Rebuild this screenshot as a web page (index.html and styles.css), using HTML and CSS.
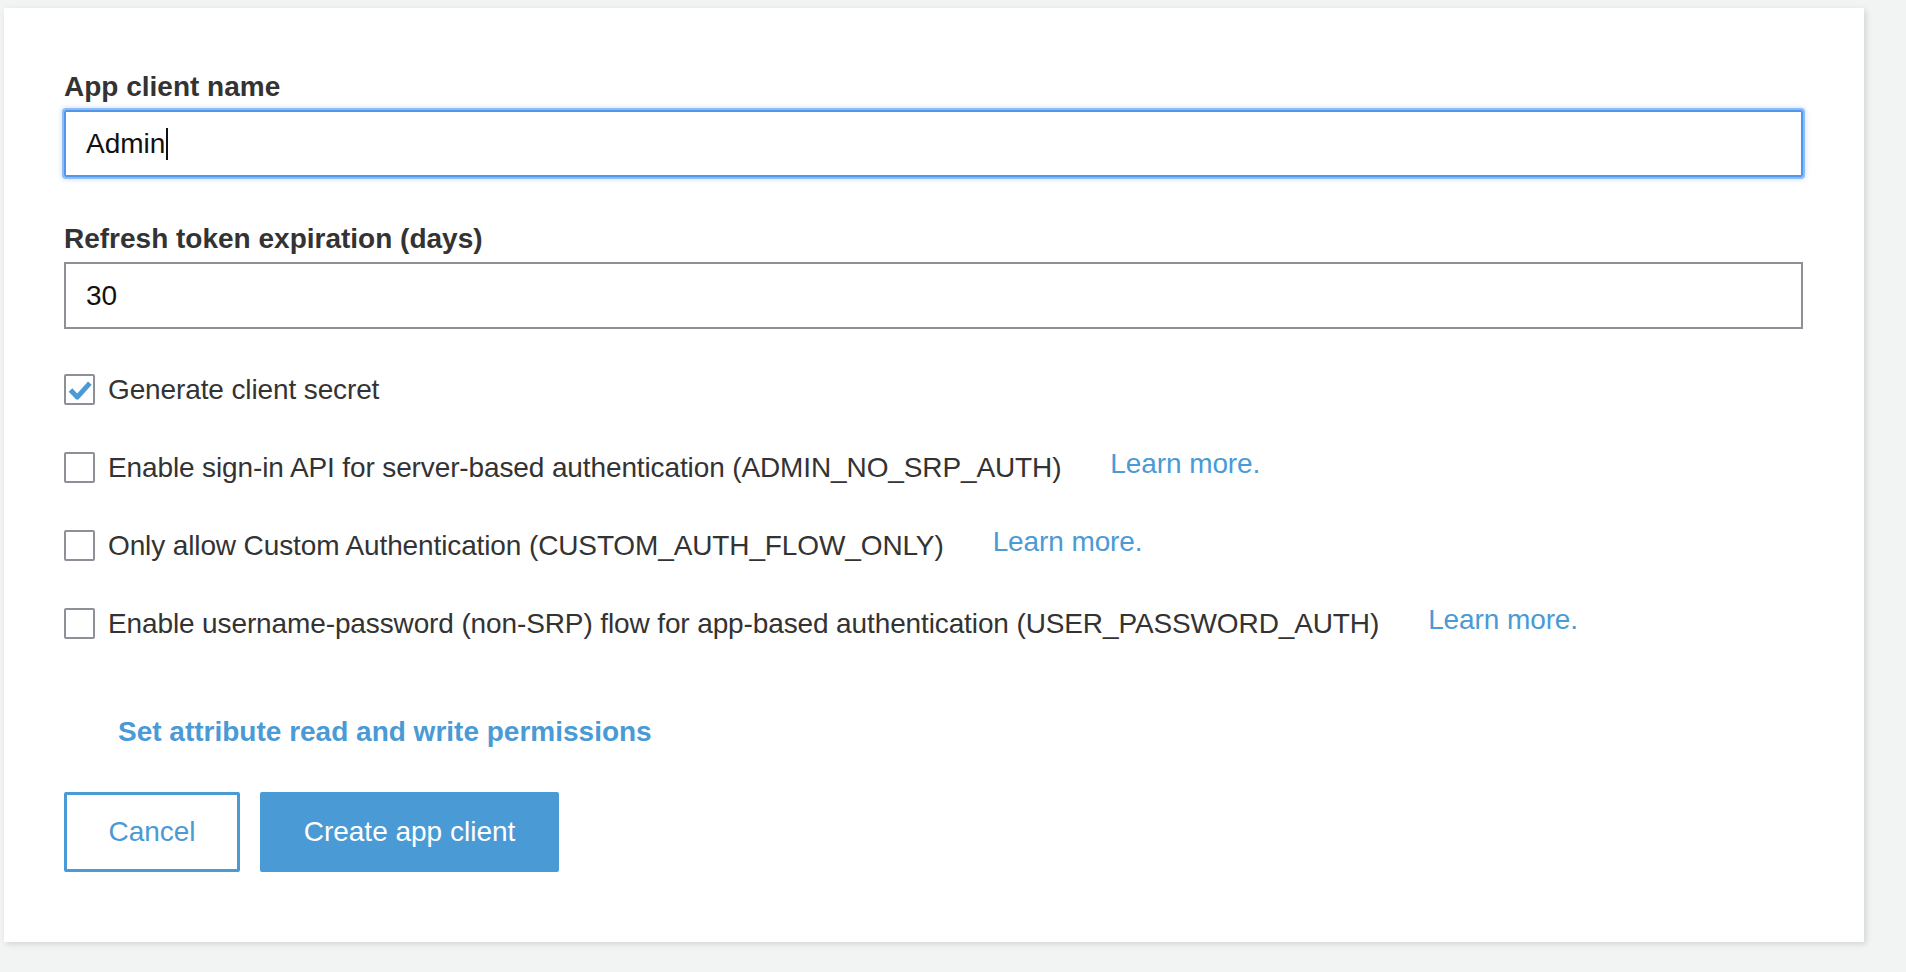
FILE: index.html
```html
<!DOCTYPE html>
<html lang="en">
<head>
<meta charset="utf-8">
<title>Create app client</title>
<link rel="stylesheet" href="styles.css">
</head>
<body>
<main class="card">
  <div class="field">
    <label class="field-label">App client name</label>
    <div class="text-input focused"><span class="value">Admin</span><span class="caret"></span></div>
  </div>
  <div class="field field-second">
    <label class="field-label">Refresh token expiration (days)</label>
    <div class="text-input"><span class="value">30</span></div>
  </div>

  <div class="options">
    <div class="option">
      <span class="checkbox checked">
        <svg viewBox="0 0 30 30" width="29" height="29"><polyline points="5,15.5 12.5,23.5 26.5,8" fill="none" stroke="#4a9ad6" stroke-width="5.5" stroke-linejoin="round"/></svg>
      </span>
      <span class="option-text">Generate client secret</span>
    </div>
    <div class="option">
      <span class="checkbox"></span>
      <span class="option-text">Enable sign-in API for server-based authentication (ADMIN_NO_SRP_AUTH)</span>
      <a class="learn" href="#">Learn more.</a>
    </div>
    <div class="option">
      <span class="checkbox"></span>
      <span class="option-text">Only allow Custom Authentication (CUSTOM_AUTH_FLOW_ONLY)</span>
      <a class="learn" href="#">Learn more.</a>
    </div>
    <div class="option">
      <span class="checkbox"></span>
      <span class="option-text">Enable username-password (non-SRP) flow for app-based authentication (USER_PASSWORD_AUTH)</span>
      <a class="learn" href="#">Learn more.</a>
    </div>
  </div>

  <a class="permissions" href="#">Set attribute read and write permissions</a>

  <div class="actions">
    <button class="btn btn-secondary" type="button">Cancel</button>
    <button class="btn btn-primary" type="button">Create app client</button>
  </div>
</main>
</body>
</html>
```

FILE: styles.css
```css
html, body {
  margin: 0;
  padding: 0;
}
body {
  background: #f2f3f3;
  font-family: "Liberation Sans", Arial, Helvetica, sans-serif;
  font-size: 28px;
  color: #333333;
  width: 1906px;
  height: 972px;
  overflow: hidden;
}
.card {
  box-sizing: border-box;
  width: 1860px;
  height: 934px;
  margin: 8px 0 0 4px;
  background: #ffffff;
  box-shadow: 2px 2px 6px rgba(0, 0, 0, 0.13);
  padding: 63px 61px 0 60px;
  display: flex;
  flex-direction: column;
}
.field {
  display: flex;
  flex-direction: column;
}
.field-second {
  margin-top: 46px;
}
.field-label {
  font-weight: bold;
  line-height: 32px;
  margin-bottom: 7px;
  color: #333333;
}
.text-input {
  box-sizing: border-box;
  height: 67px;
  border: 2px solid #8d9096;
  padding: 0 20px;
  display: flex;
  align-items: center;
  color: #111111;
  line-height: 32px;
}
.text-input.focused {
  border-color: #4f97ec;
  box-shadow: 0 0 0 2px rgba(79, 151, 236, 0.55), 0 0 4px 3px rgba(79, 151, 236, 0.25);
  border-radius: 2px;
}
.caret {
  display: inline-block;
  width: 2px;
  height: 32px;
  background: #111111;
  margin-left: 1px;
}
.options {
  margin-top: 45px;
  display: flex;
  flex-direction: column;
  gap: 47px;
}
.option {
  display: flex;
  align-items: center;
  height: 31px;
}
.checkbox {
  box-sizing: border-box;
  width: 31px;
  height: 31px;
  border: 2px solid #8d9096;
  border-radius: 2px;
  background: #ffffff;
  display: flex;
  align-items: center;
  justify-content: center;
  flex: none;
}
.option-text {
  margin-left: 13px;
  line-height: 32px;
  color: #333333;
  letter-spacing: -0.12px;
}
.learn {
  margin-left: 49px;
  color: #4a9ad6;
  text-decoration: none;
  line-height: 32px;
  padding-bottom: 8px;
  letter-spacing: -0.1px;
}
.permissions {
  margin-top: 77px;
  margin-left: 54px;
  align-self: flex-start;
  font-weight: bold;
  color: #4a9ad6;
  text-decoration: none;
  line-height: 32px;
}
.actions {
  margin-top: 44px;
  display: flex;
  gap: 20px;
}
.btn {
  box-sizing: border-box;
  height: 80px;
  font-family: "Liberation Sans", Arial, Helvetica, sans-serif;
  font-size: 28px;
  border-radius: 2px;
  cursor: pointer;
}
.btn-secondary {
  width: 176px;
  background: #ffffff;
  border: 3px solid #4a9ad6;
  color: #4a9ad6;
}
.btn-primary {
  width: 299px;
  background: #4a9ad6;
  border: 3px solid #4a9ad6;
  color: #ffffff;
}
```
